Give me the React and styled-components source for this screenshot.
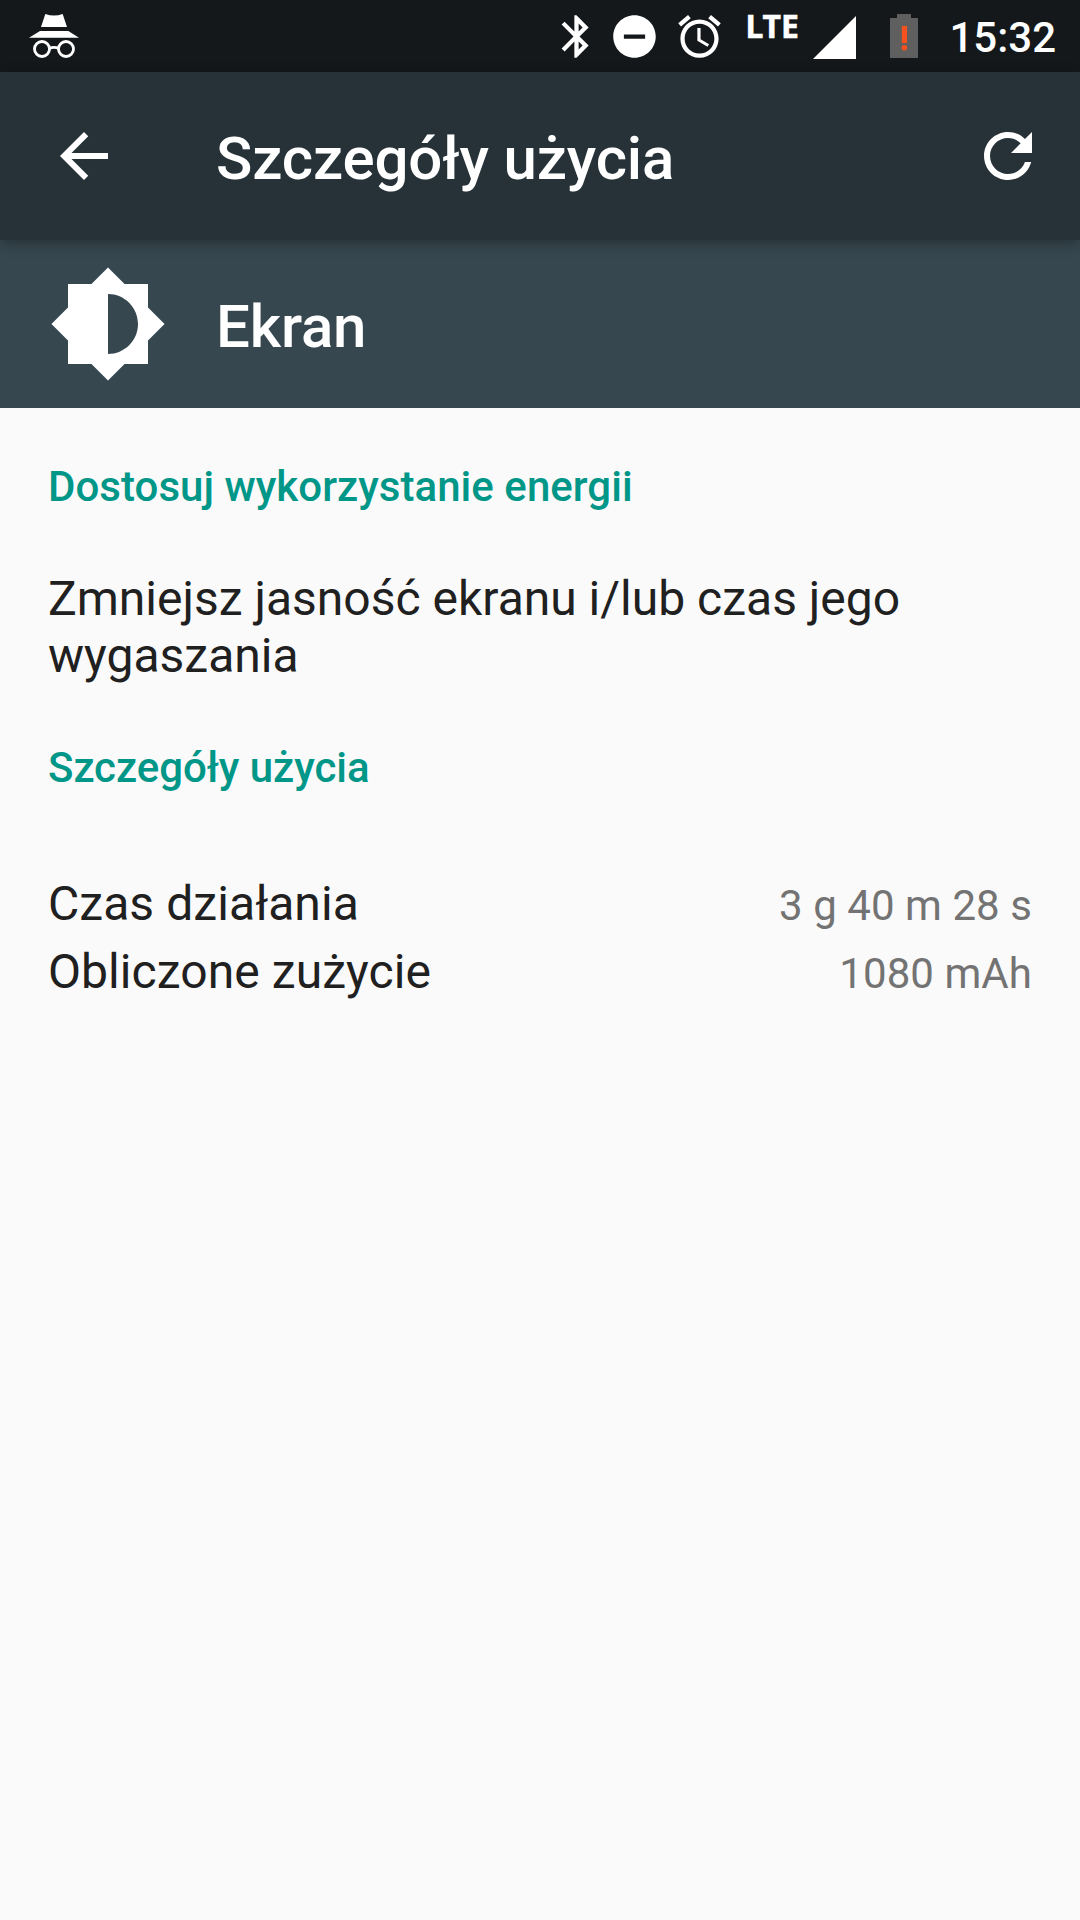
import React from "react";
import styled, { createGlobalStyle } from "styled-components";

const GlobalStyle = createGlobalStyle`
  * { box-sizing: border-box; }
  body {
    margin: 0;
    background: #fafafa;
    font-family: Roboto, "Liberation Sans", sans-serif;
  }
`;

const Screen = styled.div`
  width: 1080px;
  height: 1920px;
  display: flex;
  flex-direction: column;
  background: #fafafa;
  color: #202020;
  overflow: hidden;
`;

const StatusBar = styled.div`
  height: 72px;
  flex: none;
  display: flex;
  align-items: flex-start;
  justify-content: space-between;
  padding: 0 24px 0 29px;
  background: #14181b;
  color: #fff;
`;

const StatusIcons = styled.div`
  display: flex;
  align-items: flex-start;
`;

const Icon = styled.svg`
  display: block;
  flex: none;
  width: ${(p) => p.$w}px;
  height: ${(p) => p.$h || p.$w}px;
  margin: ${(p) => p.$m || "0"};
  fill: #fff;
`;

const Network = styled.span`
  width: 52px;
  margin: 8px 0 0 20px;
  font-family: "Noto Sans", Roboto, sans-serif;
  font-size: 32px;
  line-height: 36px;
  font-weight: 700;
  letter-spacing: -0.1px;
  -webkit-text-stroke: 0.5px #fff;
  white-space: nowrap;
`;

const Clock = styled.time`
  margin: 13px 0 0 31px;
  font-size: 42px;
  line-height: 50px;
  font-weight: 500;
`;

const AppBar = styled.header`
  position: relative;
  z-index: 1;
  height: 168px;
  flex: none;
  display: flex;
  align-items: center;
  padding: 0 36px 0 48px;
  background: #263238;
  box-shadow: 0 4px 12px rgba(0, 0, 0, 0.3);
`;

const IconButton = styled.button`
  display: block;
  padding: 0;
  border: 0;
  background: none;
`;

const Title = styled.h1`
  flex: 1;
  margin: 5px 0 0 96px;
  color: #fff;
  font-size: 60px;
  line-height: 70px;
  font-weight: 500;
  letter-spacing: -0.14px;
`;

const Banner = styled.section`
  height: 168px;
  flex: none;
  display: flex;
  align-items: center;
  padding-left: 48px;
  background: #37474f;
`;

const BannerTitle = styled(Title).attrs({ as: "h2" })`
  margin-left: 48px;
`;

const Content = styled.main`
  padding: 54px 48px 0;
`;

const SectionTitle = styled.h3`
  margin: 0;
  color: #009688;
  font-size: 42px;
  line-height: 50px;
  font-weight: 500;
  letter-spacing: ${(p) => p.$tracking || "0"};
`;

const Advice = styled.p`
  margin: 58px 0 59px;
  font-size: 48px;
  line-height: 57px;
`;

const Details = styled.dl`
  margin: 82px 0 0;
`;

const Row = styled.div`
  display: flex;
  align-items: baseline;
  justify-content: space-between;
  height: 68px;
  line-height: 57px;
`;

const Label = styled.dt`
  font-size: 48px;
  letter-spacing: 0.07px;
`;

const Value = styled.dd`
  margin: 0;
  color: #737373;
  font-size: 42px;
  letter-spacing: 0.06px;
`;

const details = [
  ["Czas działania", "3 g 40 m 28 s"],
  ["Obliczone zużycie", "1080 mAh"],
];

const IncognitoIcon = () => (
  <Icon $w={52} $h={48} $m="12px 0 0" viewBox="87 36 156 144">
    <path d="M136 42q26 9 52 0l13 39h-78zM120 93h85l32 20H87z" />
    <g fill="none" stroke="#fff" strokeWidth="8.5">
      <circle cx="126" cy="147" r="22.5" />
      <circle cx="198" cy="147" r="22.5" />
      <path d="M148 145q14-6 28 0" />
    </g>
  </Icon>
);

const BluetoothIcon = () => (
  <Icon $w={51} $m="11px 0 0" viewBox="0 0 24 24">
    <path d="M17.71 7.71L12 2h-1v7.59L6.41 5 5 6.41 10.59 12 5 17.59 6.41 19 11 14.41V22h1l5.71-5.71-4.3-4.29 4.3-4.29zM13 5.83l1.88 1.88L13 9.59V5.83zm1.88 10.46L13 18.17v-3.76l1.88 1.88z" />
  </Icon>
);

const DoNotDisturbIcon = () => (
  <Icon $w={51} $m="11px 0 0 7px" viewBox="0 0 24 24">
    <path d="M12 2C6.48 2 2 6.48 2 12s4.48 10 10 10 10-4.48 10-10S17.52 2 12 2zm5 11H7v-2h10v2z" />
  </Icon>
);

const AlarmIcon = () => (
  <Icon $w={51} $m="11px 0 0 14px" viewBox="0 0 24 24">
    <path d="M22 5.72l-4.6-3.86-1.29 1.53 4.6 3.86L22 5.72zM7.88 3.39L6.6 1.86 2 5.71l1.29 1.53 4.59-3.85zM12.5 8H11v6l4.75 2.85.75-1.23-4-2.37V8zM12 4c-4.97 0-9 4.03-9 9s4.02 9 9 9c4.97 0 9-4.03 9-9s-4.03-9-9-9zm0 16c-3.87 0-7-3.13-7-7s3.13-7 7-7 7 3.13 7 7-3.13 7-7 7z" />
  </Icon>
);

const SignalIcon = () => (
  <Icon $w={43} $m="16px 0 0 16px" viewBox="0 0 43 43">
    <path d="M43 0v43H0z" />
  </Icon>
);

const BatteryIcon = () => (
  <Icon $w={28} $h={44} $m="14px 0 0 34px" viewBox="0 0 28 44">
    <path fill="#5f5f5f" d="M7 0h14v4h7v40H0V4h7z" />
    <path fill="#f4511e" d="M11.8 12h5.2v17h-5.2z" />
    <circle fill="#f4511e" cx="14.4" cy="33.8" r="2.8" />
  </Icon>
);

export default function App() {
  return (
    <>
      <GlobalStyle />
      <Screen>
        <StatusBar>
          <IncognitoIcon />
          <StatusIcons>
            <BluetoothIcon />
            <DoNotDisturbIcon />
            <AlarmIcon />
            <Network>LTE</Network>
            <SignalIcon />
            <BatteryIcon />
            <Clock>15:32</Clock>
          </StatusIcons>
        </StatusBar>
        <AppBar>
          <IconButton>
            <Icon $w={72} viewBox="0 0 24 24">
              <path d="M20 11H7.83l5.59-5.59L12 4l-8 8 8 8 1.41-1.41L7.83 13H20v-2z" />
            </Icon>
          </IconButton>
          <Title>Szczegóły użycia</Title>
          <IconButton>
            <Icon $w={72} viewBox="0 0 24 24">
              <path d="M17.65 6.35C16.2 4.9 14.21 4 12 4c-4.42 0-7.99 3.58-7.99 8s3.57 8 7.99 8c3.73 0 6.84-2.55 7.73-6h-2.08c-.82 2.33-3.04 4-5.65 4-3.31 0-6-2.69-6-6s2.69-6 6-6c1.66 0 3.14.69 4.22 1.78L13 11h7V4l-2.35 2.35z" />
            </Icon>
          </IconButton>
        </AppBar>
        <Banner>
          <Icon $w={120} viewBox="0 0 24 24">
            <path d="M20 15.31L23.31 12 20 8.69V4h-4.69L12 .69 8.69 4H4v4.69L.69 12 4 15.31V20h4.69L12 23.31 15.31 20H20v-4.69zM12 18V6c3.31 0 6 2.69 6 6s-2.69 6-6 6z" />
          </Icon>
          <BannerTitle>Ekran</BannerTitle>
        </Banner>
        <Content>
          <SectionTitle $tracking="0.04px">Dostosuj wykorzystanie energii</SectionTitle>
          <Advice>Zmniejsz jasność ekranu i/lub czas jego wygaszania</Advice>
          <SectionTitle $tracking="-0.05px">Szczegóły użycia</SectionTitle>
          <Details>
            {details.map(([label, value]) => (
              <Row key={label}>
                <Label>{label}</Label>
                <Value>{value}</Value>
              </Row>
            ))}
          </Details>
        </Content>
      </Screen>
    </>
  );
}
